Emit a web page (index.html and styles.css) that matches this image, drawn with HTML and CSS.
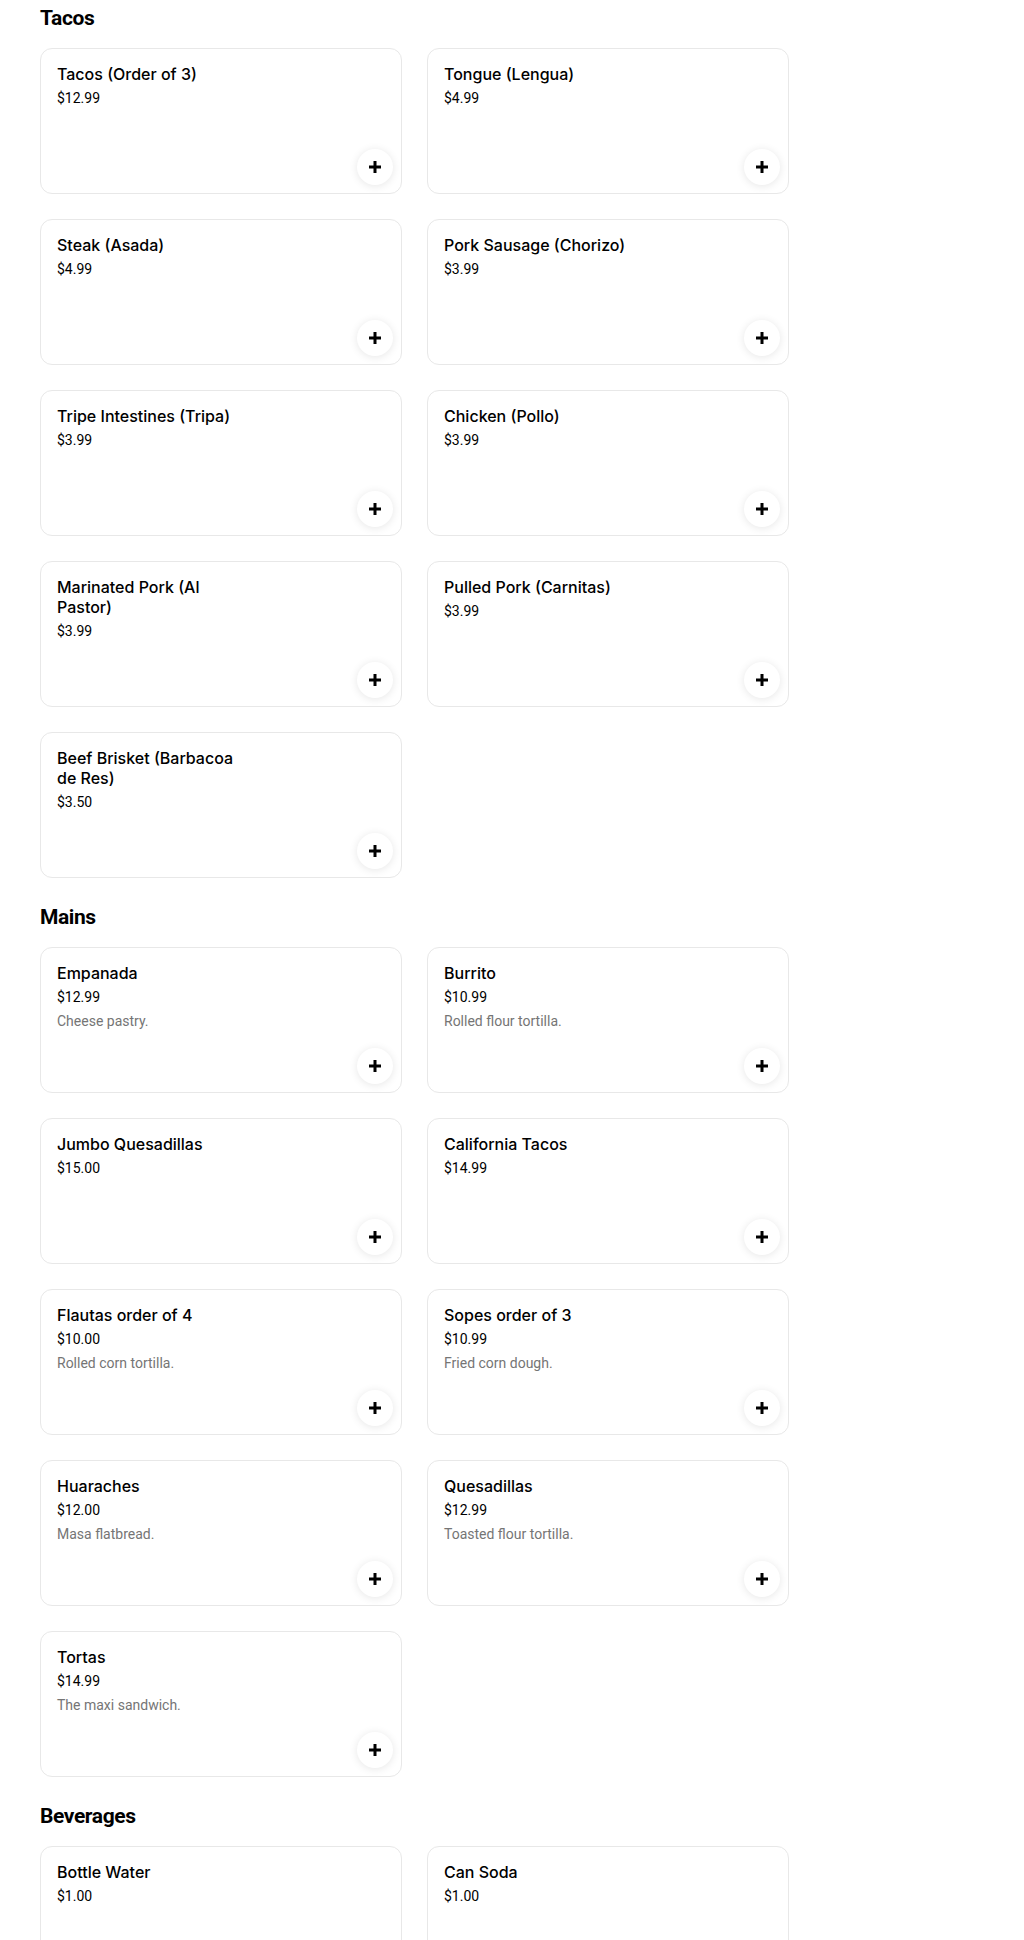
FILE: index.html
```html
<!DOCTYPE html>
<html lang="en">
<head>
<meta charset="utf-8">
<title>Menu</title>
<link rel="stylesheet" href="styles.css">
</head>
<body>
<main class="menu">
  <section class="section">
    <h2 class="section-title">Tacos</h2>
    <div class="grid">
      <div class="card"><div class="info"><div class="name">Tacos (Order of 3)</div><div class="price">$12.99</div></div><button class="add" aria-label="Add"><svg viewBox="0 0 12 12" width="12" height="12"><path d="M4.5 0h3v4.5H12v3H7.5V12h-3V7.5H0v-3h4.5z"/></svg></button></div>
      <div class="card"><div class="info"><div class="name">Tongue (Lengua)</div><div class="price">$4.99</div></div><button class="add" aria-label="Add"><svg viewBox="0 0 12 12" width="12" height="12"><path d="M4.5 0h3v4.5H12v3H7.5V12h-3V7.5H0v-3h4.5z"/></svg></button></div>
      <div class="card"><div class="info"><div class="name">Steak (Asada)</div><div class="price">$4.99</div></div><button class="add" aria-label="Add"><svg viewBox="0 0 12 12" width="12" height="12"><path d="M4.5 0h3v4.5H12v3H7.5V12h-3V7.5H0v-3h4.5z"/></svg></button></div>
      <div class="card"><div class="info"><div class="name">Pork Sausage (Chorizo)</div><div class="price">$3.99</div></div><button class="add" aria-label="Add"><svg viewBox="0 0 12 12" width="12" height="12"><path d="M4.5 0h3v4.5H12v3H7.5V12h-3V7.5H0v-3h4.5z"/></svg></button></div>
      <div class="card"><div class="info"><div class="name">Tripe Intestines (Tripa)</div><div class="price">$3.99</div></div><button class="add" aria-label="Add"><svg viewBox="0 0 12 12" width="12" height="12"><path d="M4.5 0h3v4.5H12v3H7.5V12h-3V7.5H0v-3h4.5z"/></svg></button></div>
      <div class="card"><div class="info"><div class="name">Chicken (Pollo)</div><div class="price">$3.99</div></div><button class="add" aria-label="Add"><svg viewBox="0 0 12 12" width="12" height="12"><path d="M4.5 0h3v4.5H12v3H7.5V12h-3V7.5H0v-3h4.5z"/></svg></button></div>
      <div class="card"><div class="info"><div class="name">Marinated Pork (Al Pastor)</div><div class="price">$3.99</div></div><button class="add" aria-label="Add"><svg viewBox="0 0 12 12" width="12" height="12"><path d="M4.5 0h3v4.5H12v3H7.5V12h-3V7.5H0v-3h4.5z"/></svg></button></div>
      <div class="card"><div class="info"><div class="name">Pulled Pork (Carnitas)</div><div class="price">$3.99</div></div><button class="add" aria-label="Add"><svg viewBox="0 0 12 12" width="12" height="12"><path d="M4.5 0h3v4.5H12v3H7.5V12h-3V7.5H0v-3h4.5z"/></svg></button></div>
      <div class="card"><div class="info"><div class="name">Beef Brisket (Barbacoa de Res)</div><div class="price">$3.50</div></div><button class="add" aria-label="Add"><svg viewBox="0 0 12 12" width="12" height="12"><path d="M4.5 0h3v4.5H12v3H7.5V12h-3V7.5H0v-3h4.5z"/></svg></button></div>
    </div>
  </section>

  <section class="section">
    <h2 class="section-title">Mains</h2>
    <div class="grid">
      <div class="card"><div class="info"><div class="name">Empanada</div><div class="price">$12.99</div><div class="desc">Cheese pastry.</div></div><button class="add" aria-label="Add"><svg viewBox="0 0 12 12" width="12" height="12"><path d="M4.5 0h3v4.5H12v3H7.5V12h-3V7.5H0v-3h4.5z"/></svg></button></div>
      <div class="card"><div class="info"><div class="name">Burrito</div><div class="price">$10.99</div><div class="desc">Rolled flour tortilla.</div></div><button class="add" aria-label="Add"><svg viewBox="0 0 12 12" width="12" height="12"><path d="M4.5 0h3v4.5H12v3H7.5V12h-3V7.5H0v-3h4.5z"/></svg></button></div>
      <div class="card"><div class="info"><div class="name">Jumbo Quesadillas</div><div class="price">$15.00</div></div><button class="add" aria-label="Add"><svg viewBox="0 0 12 12" width="12" height="12"><path d="M4.5 0h3v4.5H12v3H7.5V12h-3V7.5H0v-3h4.5z"/></svg></button></div>
      <div class="card"><div class="info"><div class="name">California Tacos</div><div class="price">$14.99</div></div><button class="add" aria-label="Add"><svg viewBox="0 0 12 12" width="12" height="12"><path d="M4.5 0h3v4.5H12v3H7.5V12h-3V7.5H0v-3h4.5z"/></svg></button></div>
      <div class="card"><div class="info"><div class="name">Flautas order of 4</div><div class="price">$10.00</div><div class="desc">Rolled corn tortilla.</div></div><button class="add" aria-label="Add"><svg viewBox="0 0 12 12" width="12" height="12"><path d="M4.5 0h3v4.5H12v3H7.5V12h-3V7.5H0v-3h4.5z"/></svg></button></div>
      <div class="card"><div class="info"><div class="name">Sopes order of 3</div><div class="price">$10.99</div><div class="desc">Fried corn dough.</div></div><button class="add" aria-label="Add"><svg viewBox="0 0 12 12" width="12" height="12"><path d="M4.5 0h3v4.5H12v3H7.5V12h-3V7.5H0v-3h4.5z"/></svg></button></div>
      <div class="card"><div class="info"><div class="name">Huaraches</div><div class="price">$12.00</div><div class="desc">Masa flatbread.</div></div><button class="add" aria-label="Add"><svg viewBox="0 0 12 12" width="12" height="12"><path d="M4.5 0h3v4.5H12v3H7.5V12h-3V7.5H0v-3h4.5z"/></svg></button></div>
      <div class="card"><div class="info"><div class="name">Quesadillas</div><div class="price">$12.99</div><div class="desc">Toasted flour tortilla.</div></div><button class="add" aria-label="Add"><svg viewBox="0 0 12 12" width="12" height="12"><path d="M4.5 0h3v4.5H12v3H7.5V12h-3V7.5H0v-3h4.5z"/></svg></button></div>
      <div class="card"><div class="info"><div class="name">Tortas</div><div class="price">$14.99</div><div class="desc">The maxi sandwich.</div></div><button class="add" aria-label="Add"><svg viewBox="0 0 12 12" width="12" height="12"><path d="M4.5 0h3v4.5H12v3H7.5V12h-3V7.5H0v-3h4.5z"/></svg></button></div>
    </div>
  </section>

  <section class="section">
    <h2 class="section-title">Beverages</h2>
    <div class="grid">
      <div class="card"><div class="info"><div class="name">Bottle Water</div><div class="price">$1.00</div></div><button class="add" aria-label="Add"><svg viewBox="0 0 12 12" width="12" height="12"><path d="M4.5 0h3v4.5H12v3H7.5V12h-3V7.5H0v-3h4.5z"/></svg></button></div>
      <div class="card"><div class="info"><div class="name">Can Soda</div><div class="price">$1.00</div></div><button class="add" aria-label="Add"><svg viewBox="0 0 12 12" width="12" height="12"><path d="M4.5 0h3v4.5H12v3H7.5V12h-3V7.5H0v-3h4.5z"/></svg></button></div>
    </div>
  </section>
</main>
</body>
</html>
```

FILE: styles.css
```css
* {
  box-sizing: border-box;
}

html, body {
  margin: 0;
  background: #ffffff;
}

body {
  font-family: "Inter", "Liberation Sans", Arial, sans-serif;
  color: #000000;
}

.menu {
  padding: 4px 0 0 40px;
}

.section {
  margin-bottom: 25px;
}

.section-title {
  margin: 0 0 16px;
  font-family: "Roboto", "Liberation Sans", Arial, sans-serif;
  font-weight: 700;
  font-size: 21px;
  line-height: 28px;
  letter-spacing: -0.4px;
  color: #000000;
}

.grid {
  display: grid;
  grid-template-columns: repeat(2, 362px);
  gap: 25px;
}

.card {
  position: relative;
  height: 146px;
  padding: 15px 16px;
  border: 1px solid #e8e8e8;
  border-radius: 12px;
  background: #ffffff;
}

.info {
  display: flex;
  flex-direction: column;
  gap: 4px;
  max-width: 184px;
}

.name {
  font-family: "Inter", "Liberation Sans", Arial, sans-serif;
  font-weight: 500;
  font-size: 16px;
  line-height: 20px;
  color: #000000;
}

.price {
  font-family: "Roboto", "Liberation Sans", Arial, sans-serif;
  font-size: 14px;
  line-height: 20px;
  color: #000000;
}

.desc {
  font-family: "Roboto", "Liberation Sans", Arial, sans-serif;
  font-size: 14px;
  line-height: 20px;
  color: #757575;
  white-space: nowrap;
}

.add {
  position: absolute;
  right: 8px;
  bottom: 8px;
  width: 36px;
  height: 36px;
  padding: 0;
  border: 0;
  border-radius: 50%;
  background: #ffffff;
  box-shadow: 0 1px 8px rgba(0, 0, 0, 0.1);
  display: flex;
  align-items: center;
  justify-content: center;
  cursor: pointer;
}

.add svg {
  display: block;
  fill: #000000;
}
```
